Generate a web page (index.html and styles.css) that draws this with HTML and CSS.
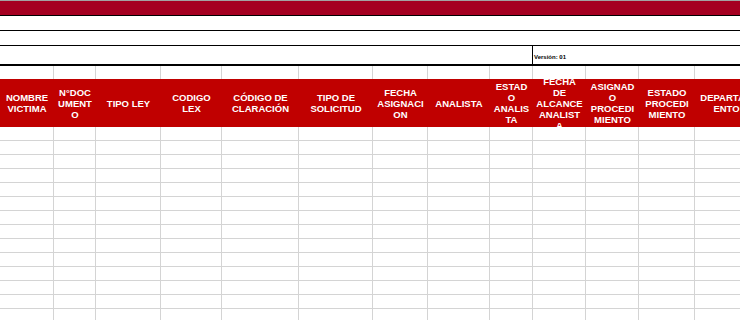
FILE: index.html
```html
<!DOCTYPE html>
<html lang="es">
<head>
<meta charset="utf-8">
<title>Hoja</title>
<link rel="stylesheet" href="styles.css">
</head>
<body>
<div class="sheet">
  <div class="title-bar"></div>
  <div class="band"></div>
  <div class="band"></div>
  <div class="meta">
    <div class="meta-left"></div>
    <div class="meta-version">Versión: 01</div>
  </div>
  <div class="grid">
    <span class="gap"></span><span class="gap"></span><span class="gap"></span><span class="gap"></span><span class="gap"></span><span class="gap"></span><span class="gap"></span><span class="gap"></span><span class="gap"></span><span class="gap"></span><span class="gap"></span><span class="gap"></span><span class="gap"></span>
    <div class="hd"><span>NOMBRE<br>VICTIMA</span></div>
    <div class="hd"><span>N°DOC<br>UMENT<br>O</span></div>
    <div class="hd"><span>TIPO LEY</span></div>
    <div class="hd"><span>CODIGO<br>LEX</span></div>
    <div class="hd"><span>CÓDIGO DE<br>CLARACIÓN</span></div>
    <div class="hd"><span>TIPO DE<br>SOLICITUD</span></div>
    <div class="hd"><span>FECHA<br>ASIGNACI<br>ON</span></div>
    <div class="hd"><span>ANALISTA</span></div>
    <div class="hd"><span>ESTAD<br>O<br>ANALIS<br>TA</span></div>
    <div class="hd"><span>FECHA<br>DE<br>ALCANCE<br>ANALIST<br>A</span></div>
    <div class="hd"><span>ASIGNAD<br>O<br>PROCEDI<br>MIENTO</span></div>
    <div class="hd"><span>ESTADO<br>PROCEDI<br>MIENTO</span></div>
    <div class="hd"><span>DEPARTAM<br>ENTO</span></div>
    <span class="c"></span><span class="c"></span><span class="c"></span><span class="c"></span><span class="c"></span><span class="c"></span><span class="c"></span><span class="c"></span><span class="c"></span><span class="c"></span><span class="c"></span><span class="c"></span><span class="c"></span>
    <span class="c"></span><span class="c"></span><span class="c"></span><span class="c"></span><span class="c"></span><span class="c"></span><span class="c"></span><span class="c"></span><span class="c"></span><span class="c"></span><span class="c"></span><span class="c"></span><span class="c"></span>
    <span class="c"></span><span class="c"></span><span class="c"></span><span class="c"></span><span class="c"></span><span class="c"></span><span class="c"></span><span class="c"></span><span class="c"></span><span class="c"></span><span class="c"></span><span class="c"></span><span class="c"></span>
    <span class="c"></span><span class="c"></span><span class="c"></span><span class="c"></span><span class="c"></span><span class="c"></span><span class="c"></span><span class="c"></span><span class="c"></span><span class="c"></span><span class="c"></span><span class="c"></span><span class="c"></span>
    <span class="c"></span><span class="c"></span><span class="c"></span><span class="c"></span><span class="c"></span><span class="c"></span><span class="c"></span><span class="c"></span><span class="c"></span><span class="c"></span><span class="c"></span><span class="c"></span><span class="c"></span>
    <span class="c"></span><span class="c"></span><span class="c"></span><span class="c"></span><span class="c"></span><span class="c"></span><span class="c"></span><span class="c"></span><span class="c"></span><span class="c"></span><span class="c"></span><span class="c"></span><span class="c"></span>
    <span class="c"></span><span class="c"></span><span class="c"></span><span class="c"></span><span class="c"></span><span class="c"></span><span class="c"></span><span class="c"></span><span class="c"></span><span class="c"></span><span class="c"></span><span class="c"></span><span class="c"></span>
    <span class="c"></span><span class="c"></span><span class="c"></span><span class="c"></span><span class="c"></span><span class="c"></span><span class="c"></span><span class="c"></span><span class="c"></span><span class="c"></span><span class="c"></span><span class="c"></span><span class="c"></span>
    <span class="c"></span><span class="c"></span><span class="c"></span><span class="c"></span><span class="c"></span><span class="c"></span><span class="c"></span><span class="c"></span><span class="c"></span><span class="c"></span><span class="c"></span><span class="c"></span><span class="c"></span>
    <span class="c"></span><span class="c"></span><span class="c"></span><span class="c"></span><span class="c"></span><span class="c"></span><span class="c"></span><span class="c"></span><span class="c"></span><span class="c"></span><span class="c"></span><span class="c"></span><span class="c"></span>
    <span class="c"></span><span class="c"></span><span class="c"></span><span class="c"></span><span class="c"></span><span class="c"></span><span class="c"></span><span class="c"></span><span class="c"></span><span class="c"></span><span class="c"></span><span class="c"></span><span class="c"></span>
    <span class="c"></span><span class="c"></span><span class="c"></span><span class="c"></span><span class="c"></span><span class="c"></span><span class="c"></span><span class="c"></span><span class="c"></span><span class="c"></span><span class="c"></span><span class="c"></span><span class="c"></span>
    <span class="c"></span><span class="c"></span><span class="c"></span><span class="c"></span><span class="c"></span><span class="c"></span><span class="c"></span><span class="c"></span><span class="c"></span><span class="c"></span><span class="c"></span><span class="c"></span><span class="c"></span>
    <span class="c"></span><span class="c"></span><span class="c"></span><span class="c"></span><span class="c"></span><span class="c"></span><span class="c"></span><span class="c"></span><span class="c"></span><span class="c"></span><span class="c"></span><span class="c"></span><span class="c"></span>
  </div>
</div>
</body>
</html>
```

FILE: styles.css
```css
html, body {
  margin: 0;
  padding: 0;
  background: #ffffff;
  overflow: hidden;
}

body {
  font-family: "Liberation Sans", Arial, sans-serif;
}

.sheet {
  width: 758px;
}

.title-bar {
  height: 14px;
  background: #a50021;
  border-top: 1px solid #a3a3a3;
  border-bottom: 1px solid #000000;
}

.band {
  height: 14px;
  border-bottom: 1px solid #000000;
}

.meta {
  display: flex;
  height: 18px;
  border-bottom: 2px solid #000000;
}

.meta-left {
  width: 532px;
  border-right: 1px solid #000000;
}

.meta-version {
  padding: 7px 0 0 1px;
  font-size: 6px;
  line-height: 8px;
  font-weight: bold;
  color: #000000;
  white-space: nowrap;
}

.grid {
  display: grid;
  grid-template-columns: 54px 42px 65px 61px 77px 74px 55px 62px 43px 53px 53px 56px 63px;
}

.gap {
  display: block;
  height: 13px;
  box-sizing: border-box;
  border-right: 1px solid #d4d4d4;
}

.hd {
  height: 48px;
  background: #c00000;
  color: #ffffff;
  font-size: 9.5px;
  font-weight: bold;
  line-height: 11px;
  display: flex;
  align-items: center;
  justify-content: center;
  text-align: center;
  white-space: nowrap;
  overflow: hidden;
}

.c {
  display: block;
  height: 14px;
  box-sizing: border-box;
  border-right: 1px solid #d4d4d4;
  border-bottom: 1px solid #d4d4d4;
}
```
